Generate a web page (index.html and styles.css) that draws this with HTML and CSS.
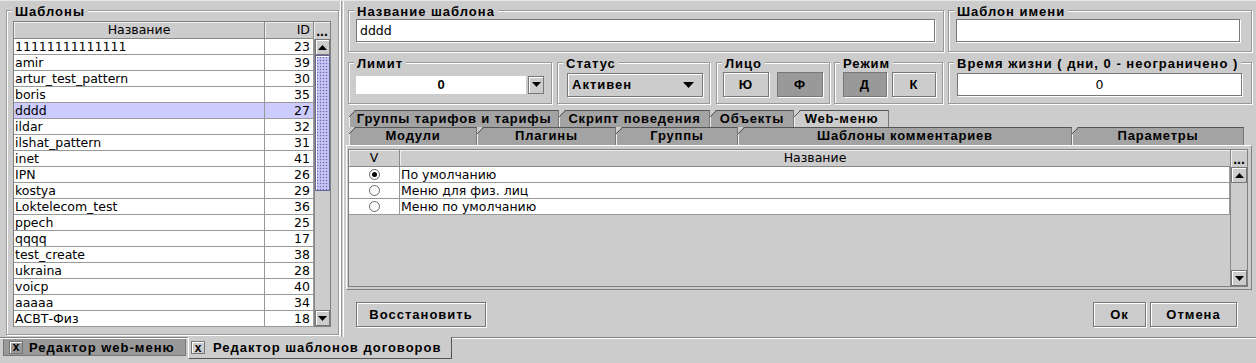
FILE: index.html
```html
<!DOCTYPE html>
<html lang="ru">
<head>
    <meta charset="UTF-8">
    <title>Редактор шаблонов договоров</title>
    <link rel="stylesheet" href="styles.css">
</head>
<body>
    <div class="window">
        <div class="workspace">
            <div class="left-pane">
                <div class="group group-list">
                    <span class="group-title">Шаблоны</span>
                    <div class="table list-table">
                        <div class="thead">
                            <div class="th c-name">Название</div>
                            <div class="th c-id">ID</div>
                            <div class="corner">...</div>
                        </div>
                        <div class="tbody-wrap">
                            <div class="tbody">
                                <div class="tr"><div class="td c-name">11111111111111</div><div class="td c-id">23</div></div>
                                <div class="tr"><div class="td c-name">amir</div><div class="td c-id">39</div></div>
                                <div class="tr"><div class="td c-name">artur_test_pattern</div><div class="td c-id">30</div></div>
                                <div class="tr"><div class="td c-name">boris</div><div class="td c-id">35</div></div>
                                <div class="tr selected"><div class="td c-name">dddd</div><div class="td c-id">27</div></div>
                                <div class="tr"><div class="td c-name">ildar</div><div class="td c-id">32</div></div>
                                <div class="tr"><div class="td c-name">ilshat_pattern</div><div class="td c-id">31</div></div>
                                <div class="tr"><div class="td c-name">inet</div><div class="td c-id">41</div></div>
                                <div class="tr"><div class="td c-name">IPN</div><div class="td c-id">26</div></div>
                                <div class="tr"><div class="td c-name">kostya</div><div class="td c-id">29</div></div>
                                <div class="tr"><div class="td c-name">Loktelecom_test</div><div class="td c-id">36</div></div>
                                <div class="tr"><div class="td c-name">ppech</div><div class="td c-id">25</div></div>
                                <div class="tr"><div class="td c-name">qqqq</div><div class="td c-id">17</div></div>
                                <div class="tr"><div class="td c-name">test_create</div><div class="td c-id">38</div></div>
                                <div class="tr"><div class="td c-name">ukraina</div><div class="td c-id">28</div></div>
                                <div class="tr"><div class="td c-name">voicp</div><div class="td c-id">40</div></div>
                                <div class="tr"><div class="td c-name">aaaaa</div><div class="td c-id">34</div></div>
                                <div class="tr"><div class="td c-name">АСВТ-Физ</div><div class="td c-id">18</div></div>
                            </div>
                            <div class="vscroll">
                                <div class="arrow-btn"><svg width="9" height="5" viewBox="0 0 9 5"><polygon points="0,5 9,5 4.5,0"/></svg></div>
                                <div class="thumb thumb-list"></div>
                                <div class="track"></div>
                                <div class="arrow-btn"><svg width="9" height="5" viewBox="0 0 9 5"><polygon points="0,0 9,0 4.5,5"/></svg></div>
                            </div>
                        </div>
                    </div>
                </div>
            </div>

            <div class="splitter"></div>

            <div class="right-pane">
                <div class="row row-top">
                    <div class="group group-fill">
                        <span class="group-title">Название шаблона</span>
                        <div class="field">dddd</div>
                    </div>
                    <div class="group group-name">
                        <span class="group-title">Шаблон имени</span>
                        <div class="field"></div>
                    </div>
                </div>

                <div class="row row-mid">
                    <div class="group group-limit">
                        <span class="group-title">Лимит</span>
                        <div class="combo-edit">
                            <div class="combo-value">0</div>
                            <div class="combo-arrow"><svg width="9" height="5" viewBox="0 0 9 5"><polygon points="0,0 9,0 4.5,5"/></svg></div>
                        </div>
                    </div>
                    <div class="group group-status">
                        <span class="group-title">Статус</span>
                        <div class="combo">
                            <span>Активен</span>
                            <svg width="11" height="6" viewBox="0 0 11 6"><polygon points="0,0 11,0 5.5,6"/></svg>
                        </div>
                    </div>
                    <div class="group group-face">
                        <span class="group-title">Лицо</span>
                        <div class="toggles">
                            <div class="btn toggle">Ю</div>
                            <div class="btn toggle pressed">Ф</div>
                        </div>
                    </div>
                    <div class="group group-mode">
                        <span class="group-title">Режим</span>
                        <div class="toggles">
                            <div class="btn toggle pressed">Д</div>
                            <div class="btn toggle">К</div>
                        </div>
                    </div>
                    <div class="group group-name">
                        <span class="group-title">Время жизни ( дни, 0 - неограничено )</span>
                        <div class="field field-center">0</div>
                    </div>
                </div>

                <div class="tabs">
                    <div class="tab-row">
                        <div class="tab" style="width: 210px">Группы тарифов и тарифы</div>
                        <div class="tab" style="width: 151px">Скрипт поведения</div>
                        <div class="tab" style="width: 84px">Объекты</div>
                        <div class="tab active" style="width: 95px">Web-меню</div>
                    </div>
                    <div class="tab-row">
                        <div class="tab" style="width: 128px">Модули</div>
                        <div class="tab" style="width: 139px">Плагины</div>
                        <div class="tab" style="width: 122px">Группы</div>
                        <div class="tab" style="width: 334px">Шаблоны комментариев</div>
                        <div class="tab" style="width: 172px">Параметры</div>
                    </div>
                </div>

                <div class="tab-panel">
                    <div class="table menu-table">
                        <div class="thead">
                            <div class="th c-check">V</div>
                            <div class="th c-title">Название</div>
                            <div class="corner">...</div>
                        </div>
                        <div class="tbody-wrap">
                            <div class="tbody">
                                <div class="tr"><div class="td c-check"><span class="radio checked"></span></div><div class="td c-title">По умолчанию</div></div>
                                <div class="tr"><div class="td c-check"><span class="radio"></span></div><div class="td c-title">Меню для физ. лиц</div></div>
                                <div class="tr"><div class="td c-check"><span class="radio"></span></div><div class="td c-title">Меню по умолчанию</div></div>
                            </div>
                            <div class="vscroll">
                                <div class="arrow-btn"><svg width="9" height="5" viewBox="0 0 9 5"><polygon points="0,5 9,5 4.5,0"/></svg></div>
                                <div class="track"></div>
                                <div class="arrow-btn"><svg width="9" height="5" viewBox="0 0 9 5"><polygon points="0,0 9,0 4.5,5"/></svg></div>
                            </div>
                        </div>
                    </div>
                </div>

                <div class="actions">
                    <div class="btn btn-wide">Восстановить</div>
                    <div class="spacer"></div>
                    <div class="btn btn-ok">Ок</div>
                    <div class="btn btn-cancel">Отмена</div>
                </div>
            </div>
        </div>

        <div class="doc-tabs">
            <div class="doc-tab">
                <span class="close-box">x</span>
                <span>Редактор web-меню</span>
            </div>
            <div class="doc-tab current">
                <span class="close-box">x</span>
                <span>Редактор шаблонов договоров</span>
            </div>
        </div>
    </div>
</body>
</html>
```

FILE: styles.css
```css
body {
    margin: 0;
    padding: 0;
    background: #cccccc;
    font-family: "DejaVu Sans", sans-serif;
    font-size: 12.5px;
    color: #000;
    overflow: hidden;
}

.window {
    width: 1256px;
    height: 363px;
    display: flex;
    flex-direction: column;
    border-top: 1px solid #e6e6e6;
    box-sizing: border-box;
}

.workspace {
    display: flex;
    height: 336px;
}

/* titled etched border, Swing style */
.group {
    position: relative;
    box-sizing: border-box;
    border: 1px solid #999;
    box-shadow: inset 1px 1px 0 #fff, 1px 1px 0 #fff;
}

.group-title {
    position: absolute;
    top: -6px;
    left: 5px;
    padding: 0 3px;
    background: #cccccc;
    font: bold 13px/14px "Liberation Sans", Arial, sans-serif;
    letter-spacing: 1px;
    white-space: nowrap;
}

.left-pane {
    width: 340px;
    box-sizing: border-box;
    padding: 9px 0 0 6px;
}

.group-list {
    width: 333px;
    height: 325px;
    padding: 10px 0 0 6px;
}

.splitter {
    width: 5px;
    background: linear-gradient(to right, #fff 0 1px, #999 1px 2px, #ccc 2px 3px, #fff 3px 4px, #ccc 4px);
}

.right-pane {
    flex: 1;
    display: flex;
    flex-direction: column;
    padding: 0 4px 0 1px;
}

.row {
    display: flex;
    margin-left: 2px;
}

.row-top {
    margin-top: 9px;
    gap: 4px;
}

.row-top .group {
    height: 42px;
    padding: 8px 0 0 7px;
}

.group-fill {
    flex: 1;
}

.group-name {
    width: 304px;
}

.row-top .group-fill .field {
    width: 579px;
}

.row-top .group-name .field {
    width: 284px;
}

.field {
    box-sizing: border-box;
    height: 23px;
    background: #fff;
    border: 1px solid #777;
    box-shadow: 1px 1px 0 #fff;
    padding: 0 3px;
    line-height: 21px;
    white-space: nowrap;
}

.field-center {
    text-align: center;
}

.row-mid {
    margin-top: 10px;
}

.row-mid .group {
    height: 42px;
    display: flex;
    align-items: center;
    padding-top: 3px;
}

.group-limit {
    width: 204px;
    padding-left: 7px;
}

.group-status {
    width: 153px;
    margin-left: 5px;
    padding-left: 9px;
}

.group-face {
    width: 114px;
    margin-left: 6px;
    padding-left: 6px;
}

.group-mode {
    width: 109px;
    margin-left: 4px;
    padding-left: 8px;
}

.row-mid .group-name {
    margin-left: 5px;
    padding-left: 8px;
}

.row-mid .group-name .field {
    width: 285px;
}

.combo-edit {
    display: flex;
    width: 188px;
    height: 18px;
}

.combo-value {
    flex: 1;
    background: #fff;
    text-align: center;
    font: bold 13px/18px "Liberation Sans", Arial, sans-serif;
}

.combo-arrow {
    width: 14px;
    margin-left: 2px;
    border: 1px solid #777;
    box-shadow: inset 1px 1px 0 #fff;
    display: flex;
    align-items: center;
    justify-content: center;
}

.combo {
    box-sizing: border-box;
    width: 136px;
    height: 24px;
    display: flex;
    align-items: center;
    justify-content: space-between;
    padding: 0 8px 0 4px;
    border: 1px solid #777;
    box-shadow: inset 1px 1px 0 #fff, 1px 1px 0 #fff;
    font: bold 13px "Liberation Sans", Arial, sans-serif;
    letter-spacing: 1px;
}

.toggles {
    display: flex;
    gap: 8px;
}

.group-mode .toggles {
    gap: 5px;
}

.btn {
    box-sizing: border-box;
    height: 25px;
    display: flex;
    align-items: center;
    justify-content: center;
    border: 1px solid #777;
    box-shadow: inset 1px 1px 0 #fff, 1px 1px 0 #fff;
    font: bold 13px "Liberation Sans", Arial, sans-serif;
    letter-spacing: 1px;
}

.toggle {
    width: 46px;
}

.group-mode .toggle {
    width: 44px;
}

.toggle.pressed {
    background: #999;
    box-shadow: 1px 1px 0 #fff;
}

.tabs {
    margin: 6px 0 0 3px;
}

.tab-row {
    display: flex;
}

.tab {
    position: relative;
    box-sizing: border-box;
    height: 17px;
    background: #a3a3a3;
    border-top: 1px solid #555;
    border-left: 1px solid #f0f0f0;
    border-right: 1px solid #777;
    clip-path: polygon(6px 0, 100% 0, 100% 100%, 0 100%, 0 6px);
    text-align: center;
    font: bold 13px/16px "Liberation Sans", Arial, sans-serif;
    letter-spacing: 0.8px;
    white-space: nowrap;
}

.tab::before {
    content: "";
    position: absolute;
    top: -1px;
    left: -1px;
    width: 7px;
    height: 7px;
    background: linear-gradient(to bottom right, transparent calc(50% - 0.7px), #555 50%, transparent calc(50% + 0.7px));
}

.tab-row + .tab-row .tab {
    height: 18px;
}

.tab.active {
    background: #cccccc;
}

.tab-panel {
    box-sizing: border-box;
    height: 145px;
    margin-left: 0;
    padding: 3px 3px 0 1px;
    border: 1px solid;
    border-color: #fff #808080 #808080 #fff;
}

.table {
    box-sizing: border-box;
    display: flex;
    flex-direction: column;
    border: 1px solid #808080;
    background: #cccccc;
}

.list-table {
    width: 318px;
    height: 306px;
}

.menu-table {
    height: 138px;
}

.thead {
    display: flex;
    height: 17px;
    flex: none;
}

.th {
    box-sizing: border-box;
    border-right: 1px solid #888;
    border-bottom: 1px solid #888;
    box-shadow: inset 1px 1px 0 #eee;
    text-align: center;
    line-height: 16px;
}

.corner {
    width: 16px;
    font: bold 14px/18px "Liberation Sans", Arial, sans-serif;
    text-align: center;
    letter-spacing: 0;
    overflow: hidden;
    box-shadow: inset 1px 1px 0 #eee;
}

.tbody-wrap {
    flex: 1;
    display: flex;
    min-height: 0;
}

.tbody {
    flex: 1;
}

.tr {
    display: flex;
    height: 16px;
    background: #fff;
}

.tr.selected {
    background: #ccccff;
}

.td {
    box-sizing: border-box;
    height: 16px;
    border-right: 1px solid #999;
    border-bottom: 1px solid #999;
    line-height: 15px;
    padding: 0 1px;
    white-space: nowrap;
    overflow: hidden;
}

.c-name {
    width: 251px;
}

.c-id {
    width: 49px;
    text-align: right;
    padding-right: 3px;
}

.c-check {
    width: 51px;
    display: flex;
    align-items: center;
    justify-content: center;
}

.c-title {
    flex: 1;
}

.th.c-title {
    text-align: center;
}

.vscroll {
    width: 16px;
    display: flex;
    flex-direction: column;
    border-left: 1px solid #888;
    background: #cccccc;
}

.arrow-btn {
    box-sizing: border-box;
    height: 16px;
    flex: none;
    display: flex;
    align-items: center;
    justify-content: center;
    border: 1px solid #777;
    box-shadow: inset 1px 1px 0 #fff;
}

.thumb {
    flex: none;
    box-sizing: border-box;
    border: 1px solid #666699;
    box-shadow: inset 1px 1px 0 #fff;
    background-color: #b8b8ee;
    background-image: radial-gradient(#6666aa 0.7px, transparent 0.8px), radial-gradient(#eeeeff 0.7px, transparent 0.8px);
    background-size: 3px 3px;
    background-position: 0 0, 1.5px 1.5px;
}

.thumb-list {
    height: 136px;
}

.track {
    flex: 1;
}

.radio {
    box-sizing: border-box;
    width: 11px;
    height: 11px;
    border: 1px solid #666;
    border-radius: 50%;
    background: #fff;
    display: flex;
    align-items: center;
    justify-content: center;
}

.radio.checked::after {
    content: "";
    width: 5px;
    height: 5px;
    border-radius: 50%;
    background: #000;
}

.actions {
    display: flex;
    padding: 12px 15px 0 10px;
    gap: 4px;
}

.spacer {
    flex: 1;
}

.btn-wide {
    width: 130px;
}

.btn-ok {
    width: 53px;
}

.btn-cancel {
    width: 87px;
}

.doc-tabs {
    flex: 1;
    display: flex;
    align-items: flex-start;
    gap: 2px;
    padding-left: 3px;
    border-top: 1px solid #808080;
    box-shadow: inset 0 1px 0 #fff;
}

.doc-tab {
    box-sizing: border-box;
    display: flex;
    align-items: center;
    gap: 6px;
    width: 183px;
    height: 17px;
    margin-top: 1px;
    padding-left: 5px;
    background: #999;
    border: 1px solid #777;
    border-top: none;
    font: bold 13px "Liberation Sans", Arial, sans-serif;
    letter-spacing: 1px;
    white-space: nowrap;
}

.doc-tab.current {
    width: 264px;
    height: 22px;
    margin-top: -1px;
    background: #cccccc;
    border-left: 1px solid #fff;
    border-right: 1px solid #555;
    border-bottom: 1px solid #555;
    padding-left: 2px;
    gap: 8px;
}

.close-box {
    box-sizing: border-box;
    width: 14px;
    height: 13px;
    display: flex;
    align-items: center;
    justify-content: center;
    border: 1px solid #777;
    box-shadow: inset 1px 1px 0 #fff;
    font: bold 12px/1 "Liberation Sans", Arial, sans-serif;
    letter-spacing: 0;
}
```
